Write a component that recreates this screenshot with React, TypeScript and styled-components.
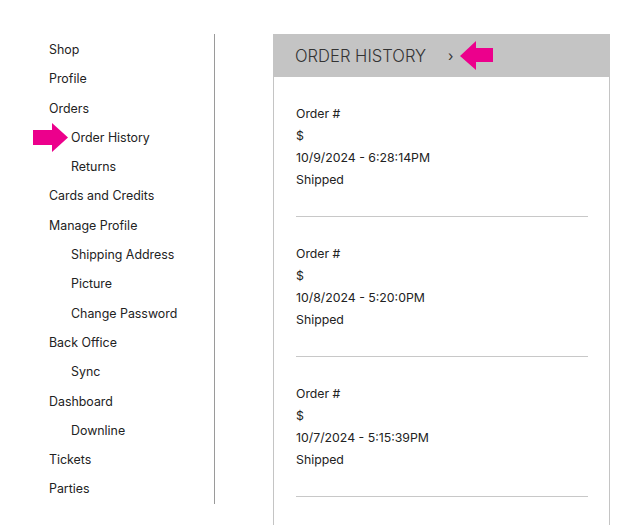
import React from "react";
import styled, { createGlobalStyle } from "styled-components";

const Global = createGlobalStyle`
  html, body { margin: 0; padding: 0; background: #fff; }
  body { font-family: Inter, "Noto Sans", sans-serif; color: #222; }
  * { box-sizing: border-box; }
`;

const Page = styled.div`
  display: flex;
  align-items: flex-start;
  padding-top: 34px;
`;

const Sidebar = styled.nav`
  width: 215px;
  flex: none;
  border-right: 1px solid #9a9a9a;
  margin-right: 58px;
  padding-bottom: 1px;
`;

const NavList = styled.ul`
  list-style: none;
  margin: 0;
  padding: 0;
`;

const NavItem = styled.li<{ $sub?: boolean }>`
  position: relative;
  height: 29.3px;
  line-height: 31.4px;
  padding-left: ${(p) => (p.$sub ? 71 : 49)}px;
  font-size: 12.4px;
  color: #222;
  white-space: nowrap;
`;

const Pointer = styled.svg`
  position: absolute;
  left: 33px;
  top: 1px;
  width: 36px;
  height: 30px;
`;

const Panel = styled.section`
  width: 337px;
  flex: none;
  border-left: 1px solid #c4c4c4;
  border-right: 1px solid #c4c4c4;
  min-height: 500px;
`;

const Header = styled.header`
  height: 43px;
  background: #c4c4c4;
  display: flex;
  align-items: center;
  padding-left: 22px;
  margin: 0 -1px;
`;

const Title = styled.h1`
  margin: 0;
  font-size: 16.6px;
  font-weight: 300;
  color: #333;
  letter-spacing: 0;
`;

const Chevron = styled.span`
  margin-left: 22px;
  font-size: 14px;
  color: #333;
`;

const HeaderArrow = styled.svg`
  margin-left: 7px;
  width: 34px;
  height: 30px;
`;

const Orders = styled.div`
  padding: 0 21px 0 22px;
`;

const Order = styled.div`
  padding: 26px 0 25px;
  border-bottom: 1px solid #c8c8c8;
`;

const Line = styled.div`
  font-size: 12.3px;
  line-height: 22px;
  color: #222;
`;

const nav: { label: string; sub?: boolean; active?: boolean }[] = [
  { label: "Shop" },
  { label: "Profile" },
  { label: "Orders" },
  { label: "Order History", sub: true, active: true },
  { label: "Returns", sub: true },
  { label: "Cards and Credits" },
  { label: "Manage Profile" },
  { label: "Shipping Address", sub: true },
  { label: "Picture", sub: true },
  { label: "Change Password", sub: true },
  { label: "Back Office" },
  { label: "Sync", sub: true },
  { label: "Dashboard" },
  { label: "Downline", sub: true },
  { label: "Tickets" },
  { label: "Parties" },
];

const orders = [
  "10/9/2024 - 6:28:14PM",
  "10/8/2024 - 5:20:0PM",
  "10/7/2024 - 5:15:39PM",
];

export default function App() {
  return (
    <>
      <Global />
      <Page>
        <Sidebar>
          <NavList>
            {nav.map((n) => (
              <NavItem key={n.label} $sub={n.sub}>
                {n.active && (
                  <Pointer viewBox="0 0 36 30">
                    <polygon points="0,7 19,7 19,0 35,14.5 19,29 19,22 0,22" fill="#ec008c" />
                  </Pointer>
                )}
                {n.label}
              </NavItem>
            ))}
          </NavList>
        </Sidebar>
        <Panel>
          <Header>
            <Title>ORDER HISTORY</Title>
            <Chevron>›</Chevron>
            <HeaderArrow viewBox="0 0 34 30">
              <polygon points="0,15 16,0 16,7 33,7 33,21 16,21 16,29" fill="#ec008c" />
            </HeaderArrow>
          </Header>
          <Orders>
            {orders.map((d) => (
              <Order key={d}>
                <Line>Order #</Line>
                <Line>$</Line>
                <Line>{d}</Line>
                <Line>Shipped</Line>
              </Order>
            ))}
          </Orders>
        </Panel>
      </Page>
    </>
  );
}
